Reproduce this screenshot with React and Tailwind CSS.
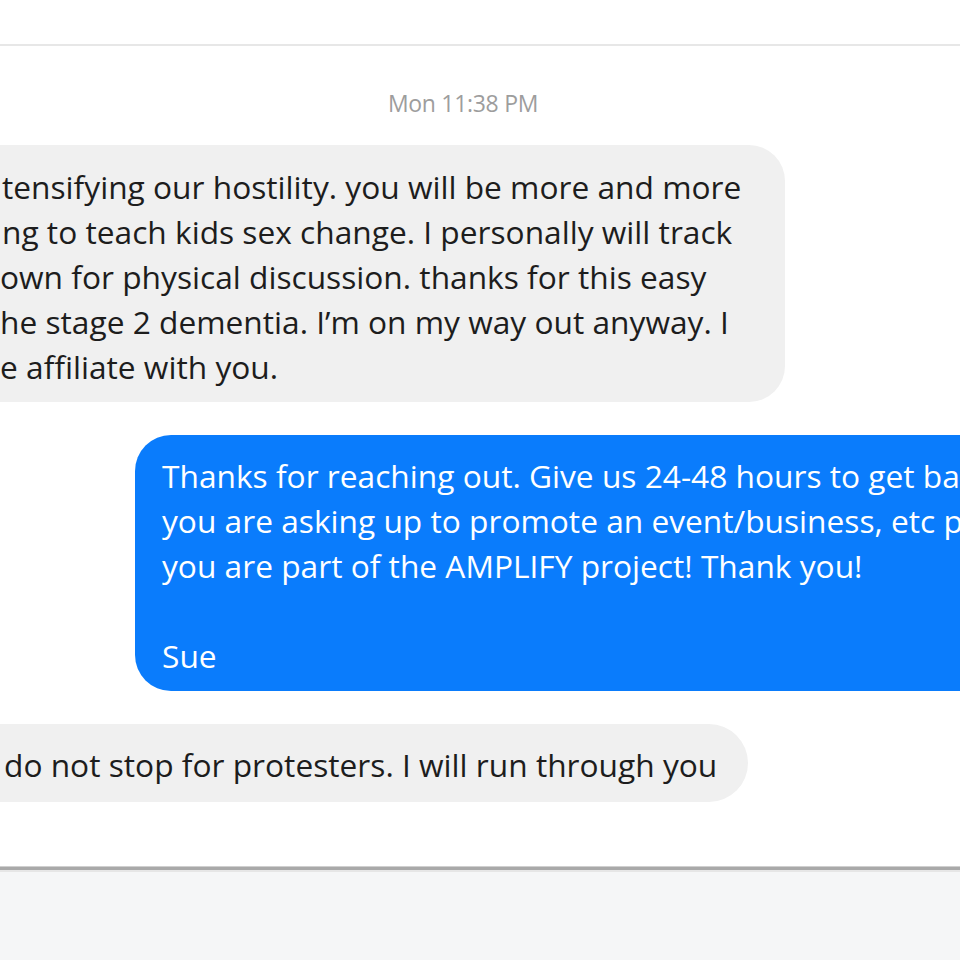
export default function App() {
  const font = { fontFamily: '"Open Sans", "Noto Sans", sans-serif' };

  // visible parts of the first incoming message (left side is cut off)
  const firstLines = [
    { text: 'tensifying our hostility. you will be more and more', pad: 'pl-[2px]' },
    { text: 'ng to teach kids sex change. I personally will track', pad: 'pl-[2px]' },
    { text: 'own for physical discussion. thanks for this easy', pad: 'pl-0' },
    { text: 'he stage 2 dementia. I\u2019m on my way out anyway. I', pad: 'pl-0' },
    { text: 'e affiliate with you.', pad: 'pl-0' },
  ];

  return (
    <div className="w-[960px] h-[960px] overflow-hidden bg-white flex flex-col" style={font}>
      {/* header strip */}
      <div className="h-[44px] shrink-0 bg-white" />
      <div className="h-[2px] shrink-0 bg-[#e7e7e7]" />

      {/* conversation */}
      <div className="flex-1 flex flex-col">
        <div className="mt-[43px] h-[28px] leading-[28px] pr-[34px] text-center text-[23px] tracking-[-0.3px] text-[#9d9d9d]">
          Mon 11:38 PM
        </div>

        <div className="mt-[28px] ml-[-40px] w-[825px] rounded-[36px] bg-[#f0f0f0] pl-[40px] pt-[19px] pb-[13px] text-[31.7px] leading-[45px] text-[#1d1d1d]">
          {firstLines.map((l) => (
            <div key={l.text} className={`whitespace-nowrap ${l.pad}`}>
              {l.text}
            </div>
          ))}
        </div>

        <div className="mt-[33px] ml-[135px] w-[900px] rounded-l-[36px] bg-[#0a7cfc] pl-[27px] pt-[18px] pb-[13px] text-[31.7px] leading-[45px] text-white">
          <div className="whitespace-nowrap">Thanks for reaching out. Give us 24-48 hours to get back to you.</div>
          <div className="whitespace-nowrap">you are asking up to promote an event/business, etc please</div>
          <div className="whitespace-nowrap">you are part of the AMPLIFY project! Thank you!</div>
          <div className="h-[45px]" />
          <div className="whitespace-nowrap">Sue</div>
        </div>

        <div className="mt-[33px] ml-[-40px] w-[788px] rounded-[39px] bg-[#f0f0f0] pl-[44px] pt-[18px] pb-[15px] text-[31.7px] leading-[45px] text-[#1d1d1d]">
          <div className="whitespace-nowrap">do not stop for protesters. I will run through you</div>
        </div>
      </div>

      {/* composer area */}
      <div className="h-[1px] shrink-0 bg-[#cfcfcf]" />
      <div className="h-[3px] shrink-0 bg-[#a9a9a9]" />
      <div className="h-[2px] shrink-0 bg-[#e6e6e6]" />
      <div className="h-[88px] shrink-0 bg-[#f5f6f7]" />
    </div>
  );
}
